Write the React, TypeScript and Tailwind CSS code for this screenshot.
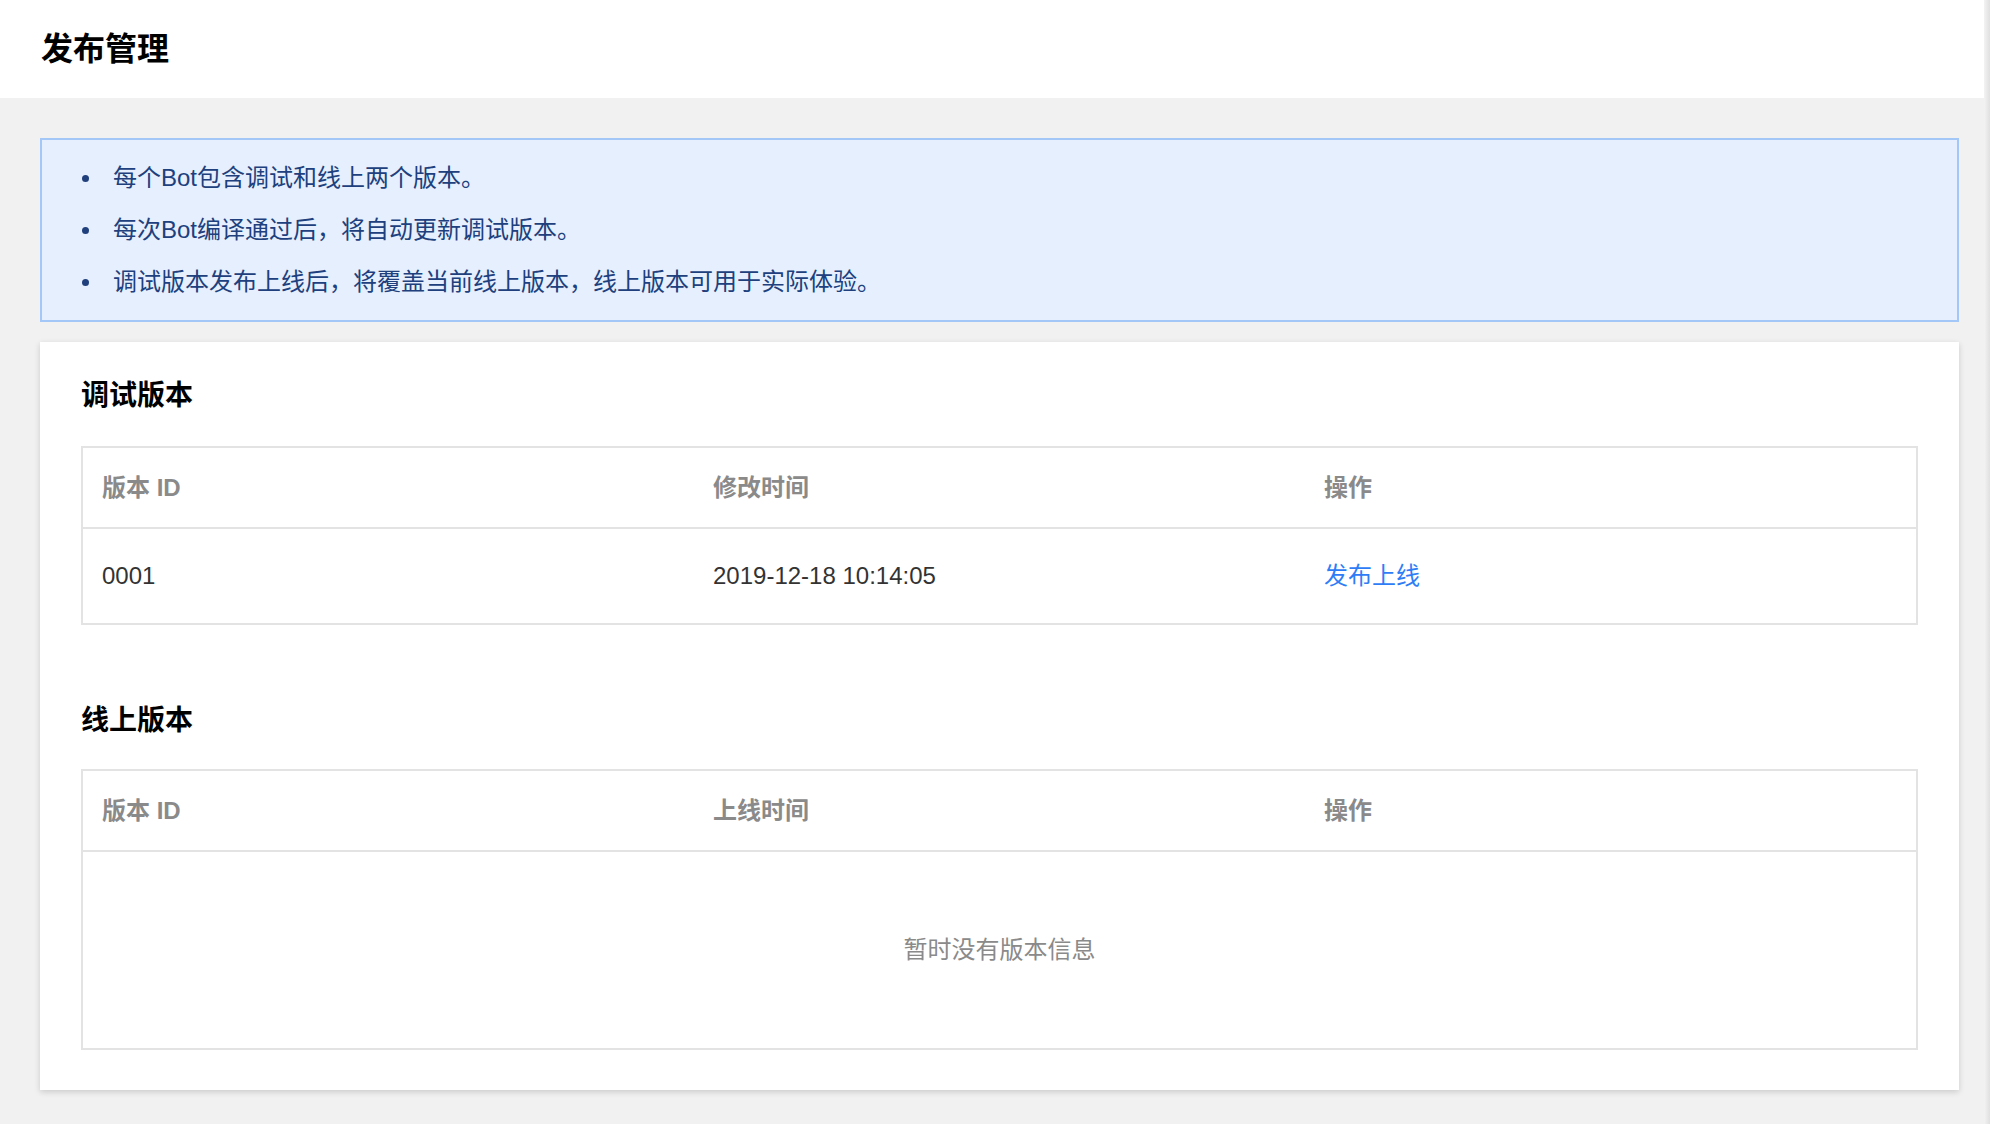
import React from 'react';

const FONT = '"Liberation Sans", "Noto Sans CJK SC", sans-serif';

const tips = [
  '每个Bot包含调试和线上两个版本。',
  '每次Bot编译通过后，将自动更新调试版本。',
  '调试版本发布上线后，将覆盖当前线上版本，线上版本可用于实际体验。',
];

interface VersionTableProps {
  timeLabel: string;
  rows: { id: string; time: string }[];
}

const VersionTable: React.FC<VersionTableProps> = ({ timeLabel, rows }) => {
  return (
    <div className="border-2 border-[#e3e3e3]">
      <div className="grid grid-cols-3 h-[81px] items-center text-[24px] font-bold text-[#8a8a8a] border-b-2 border-[#e3e3e3]">
        <div className="pl-[19px]">版本 ID</div>
        <div className="pl-[19px]">{timeLabel}</div>
        <div className="pl-[19px]">操作</div>
      </div>
      {rows.length > 0 ? (
        rows.map((r) => (
          <div key={r.id} className="grid grid-cols-3 h-[94px] items-center text-[24px] text-[#333]">
            <div className="pl-[19px]">{r.id}</div>
            <div className="pl-[19px]">{r.time}</div>
            <div className="pl-[19px]">
              <a className="text-[#2f7df6] cursor-pointer">发布上线</a>
            </div>
          </div>
        ))
      ) : (
        <div className="h-[196px] flex items-center justify-center text-[24px] text-[#8a8a8a]">
          暂时没有版本信息
        </div>
      )}
    </div>
  );
};

const App: React.FC = () => {
  return (
    <div className="flex min-h-screen bg-[#f1f1f1]" style={{ fontFamily: FONT }}>
      <div className="flex-1 min-w-0">
        <div className="h-[98px] bg-white flex items-center pl-[41px]">
          <h1 className="text-[32px] font-bold text-black leading-none">发布管理</h1>
        </div>

        <div className="pt-[40px] pl-[40px] pr-[25px] pb-[32px]">
          <div className="border-2 border-[#a3c8f8] bg-[#e5effd] pt-[12px] pb-[12px]">
            {tips.map((t) => (
              <div key={t} className="flex items-center h-[52px] pl-[40px] text-[24px] text-[#203f7d]">
                <span className="w-[7px] h-[7px] rounded-full bg-[#203f7d] shrink-0" />
                <span className="ml-[24px]">{t}</span>
              </div>
            ))}
          </div>

          <div className="mt-[20px] bg-white shadow-[0_2px_6px_rgba(0,0,0,0.16)] px-[41px] pt-[36px] pb-[40px]">
            <h2 className="text-[28px] font-bold text-black leading-[36px]">调试版本</h2>
            <div className="mt-[32px]">
              <VersionTable timeLabel="修改时间" rows={[{ id: '0001', time: '2019-12-18 10:14:05' }]} />
            </div>

            <h2 className="mt-[78px] text-[28px] font-bold text-black leading-[36px]">线上版本</h2>
            <div className="mt-[30px]">
              <VersionTable timeLabel="上线时间" rows={[]} />
            </div>
          </div>
        </div>
      </div>
      <div className="w-[6px] shrink-0 bg-gradient-to-r from-[#f3f3f3] to-[#e0e0e0]" />
    </div>
  );
};

export default App;
